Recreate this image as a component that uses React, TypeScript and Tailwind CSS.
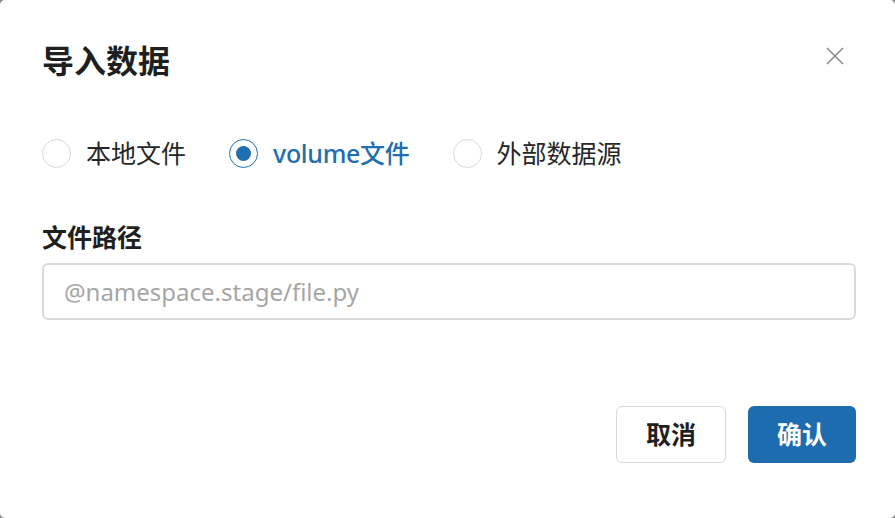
import React from 'react';

const font = { fontFamily: '"Noto Sans", "Noto Sans CJK SC", sans-serif' };

const options = ['本地文件', 'volume文件', '外部数据源'];

const Radio: React.FC<{ label: string; checked: boolean }> = ({ label, checked }) => (
  <label className="flex items-center gap-[15px] cursor-pointer">
    <span
      className={
        checked
          ? 'w-[29px] h-[29px] rounded-full border-[1.5px] border-[#1f6eb0] flex items-center justify-center'
          : 'w-[29px] h-[29px] rounded-full border-[1.5px] border-[#d9d9d9] flex items-center justify-center'
      }
    >
      {checked && <span className="w-[15px] h-[15px] rounded-full bg-[#1f6eb0]" />}
    </span>
    <span
      className={
        checked
          ? 'text-[25px] leading-[34px] font-medium tracking-[-0.3px] text-[#1f6eb0]'
          : 'text-[25px] leading-[34px] text-[#262626]'
      }
    >
      {label}
    </span>
  </label>
);

export default function App() {
  const [selected] = React.useState(1);

  return (
    <div className="w-[895px] h-[518px] bg-[#888]" style={font}>
      <div className="w-full h-full bg-white rounded-[5px] flex flex-col pl-[42px] pr-[39px] pt-[40px] pb-[55px]">
        <div className="flex justify-between items-start h-[40px]">
          <h1 className="text-[32px] leading-[42px] font-bold text-[#1f1f1f]">导入数据</h1>
          <button className="mt-[7px] mr-[12px] w-[18px] h-[18px] text-[#8c8c8c]">
            <svg viewBox="0 0 18 18" width="18" height="18" fill="none" stroke="currentColor" strokeWidth="1.6">
              <path d="M1 1L17 17M17 1L1 17" />
            </svg>
          </button>
        </div>

        <div className="flex items-center gap-[43px] mt-[56px]">
          {options.map((o, i) => (
            <Radio key={o} label={o} checked={i === selected} />
          ))}
        </div>

        <div className="mt-[50px] text-[25px] leading-[34px] font-bold text-[#1f1f1f]">文件路径</div>

        <input
          className="mt-[9px] w-full h-[57px] rounded-[6px] border-2 border-[#dadada] px-[20px] text-[24px] text-[#262626] placeholder:text-[#a6a6a6] outline-none"
          placeholder="@namespace.stage/file.py"
          style={font}
        />

        <div className="mt-auto flex justify-end gap-[22px]">
          <button className="w-[110px] h-[57px] rounded-[6px] border-[1.5px] border-[#d9d9d9] bg-white text-[25px] font-bold text-[#1f1f1f]">
            取消
          </button>
          <button className="w-[108px] h-[57px] rounded-[6px] bg-[#1d6cb0] text-[25px] font-bold text-white">
            确认
          </button>
        </div>
      </div>
    </div>
  );
}
